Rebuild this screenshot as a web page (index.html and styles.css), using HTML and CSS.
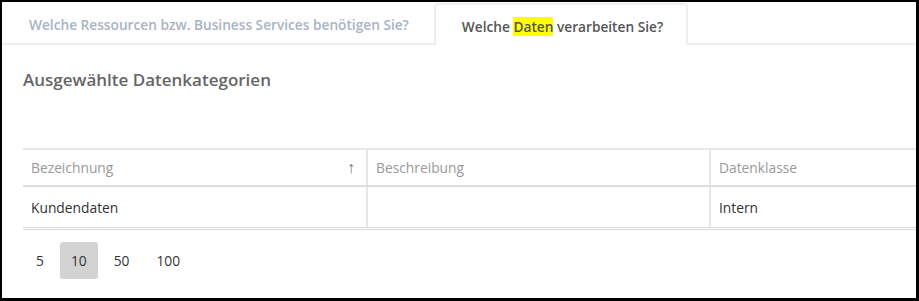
FILE: index.html
```html
<!DOCTYPE html>
<html lang="de">
<head>
<meta charset="utf-8">
<link rel="stylesheet" href="styles.css">
</head>
<body>
<div class="frame">
  <div class="tabs">
    <div class="tab"><span>Welche Ressourcen bzw. Business Services benötigen Sie?</span></div>
    <div class="tab active"><span>Welche <mark class="hl">Daten</mark> verarbeiten Sie?</span></div>
    <div class="tab-fill"></div>
  </div>
  <div class="content">
    <h2 class="title">Ausgewählte Datenkategorien</h2>
    <table class="grid">
      <thead>
        <tr>
          <th class="c1"><span>Bezeichnung</span><span class="sort">↑</span></th>
          <th class="c2">Beschreibung</th>
          <th class="c3">Datenklasse</th>
        </tr>
      </thead>
      <tbody>
        <tr>
          <td>Kundendaten</td>
          <td></td>
          <td>Intern</td>
        </tr>
      </tbody>
    </table>
    <div class="pager">
      <span class="pg">5</span>
      <span class="pg sel">10</span>
      <span class="pg">50</span>
      <span class="pg">100</span>
    </div>
  </div>
</div>
</body>
</html>
```

FILE: styles.css
```css
html, body {
  margin: 0;
  padding: 0;
  background: #000;
}
.frame {
  box-sizing: border-box;
  width: 919px;
  height: 301px;
  border-style: solid;
  border-color: #000;
  border-width: 2px 3px 3px 2px;
  background: #fff;
  overflow: hidden;
  font-family: "Open Sans", "Liberation Sans", sans-serif;
}
.tabs {
  display: flex;
  height: 43px;
  padding-top: 1px;
  box-sizing: border-box;
}
.tab {
  display: flex;
  align-items: center;
  padding: 2px 25px 0 27px;
  font-size: 13.7px;
  font-weight: 600;
  color: #a8b3c6;
  border-bottom: 2px solid #eeeeee;
  white-space: nowrap;
}
.tab.active {
  color: #555;
  padding: 2px 23px 0 26px;
  border: 2px solid #eeeeee;
  border-bottom: none;
  border-radius: 4px 4px 0 0;
  background: #fff;
}
.hl {
  background: #ffff00;
  color: #555;
}
.tab-fill {
  flex: 1;
  border-bottom: 2px solid #eeeeee;
}
.content {
  padding: 0 0 0 21px;
}
.title {
  margin: 23px 0 0 0;
  font-size: 17px;
  font-weight: 600;
  color: #666;
  line-height: 24px;
  height: 24px;
}
.grid {
  margin-top: 56px;
  border-collapse: collapse;
  table-layout: fixed;
  width: 920px;
  font-size: 13.8px;
}
.grid th, .grid td {
  text-align: left;
  padding: 0 8px;
  border-left: 2px solid #e6e6e6;
}
.grid th:first-child, .grid td:first-child {
  border-left: none;
}
.grid th {
  font-weight: 400;
  color: #999;
  height: 35px;
  border-top: 2px solid #e6e6e6;
  border-bottom: 2px solid #dddddd;
}
.grid td {
  color: #333;
  height: 40px;
  border-bottom: 3px double #dddddd;
}
.c1 { width: 327px; }
.c2 { width: 325px; }
.sort {
  float: right;
  color: #777;
  font-size: 16px;
  line-height: 19px;
  margin-right: 3px;
}
.pager {
  display: flex;
  gap: 5px;
  margin: 12px 0 0 2px;
  font-size: 13.8px;
  color: #333;
}
.pg {
  display: flex;
  align-items: center;
  justify-content: center;
  height: 37px;
  padding: 0 11px;
  border-radius: 3px;
}
.pg.sel {
  background: #d3d3d3;
}
```
